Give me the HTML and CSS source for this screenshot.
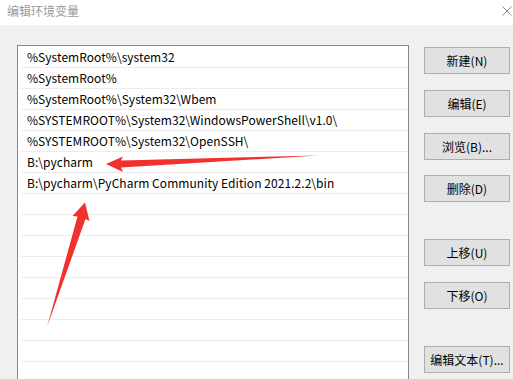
FILE: index.html
```html
<!DOCTYPE html>
<html lang="zh-CN">
<head>
<meta charset="utf-8">
<title>编辑环境变量</title>
<link rel="stylesheet" href="styles.css">
</head>
<body>
<div class="window">
  <div class="titlebar">
    <span class="title">编辑环境变量</span>
    <svg class="close" width="10" height="10" viewBox="0 0 10 10"><path d="M0.5 0.5L9.5 9.5M9.5 0.5L0.5 9.5" stroke="#8a8a8a" stroke-width="1" fill="none"/></svg>
  </div>
  <div class="content">
    <div class="list">
      <div class="row">%SystemRoot%\system32</div>
      <div class="row">%SystemRoot%</div>
      <div class="row">%SystemRoot%\System32\Wbem</div>
      <div class="row">%SYSTEMROOT%\System32\WindowsPowerShell\v1.0\</div>
      <div class="row">%SYSTEMROOT%\System32\OpenSSH\</div>
      <div class="row">B:\pycharm</div>
      <div class="row">B:\pycharm\PyCharm Community Edition 2021.2.2\bin</div>
      <div class="row"></div>
      <div class="row"></div>
      <div class="row"></div>
      <div class="row"></div>
      <div class="row"></div>
      <div class="row"></div>
      <div class="row"></div>
      <div class="row"></div>
      <div class="row"></div>
    </div>
    <div class="buttons">
      <button class="btn">新建(N)</button>
      <button class="btn">编辑(E)</button>
      <button class="btn">浏览(B)...</button>
      <button class="btn">删除(D)</button>
      <button class="btn spaced">上移(U)</button>
      <button class="btn">下移(O)</button>
      <button class="btn spaced">编辑文本(T)...</button>
    </div>
  </div>
  <svg class="arrows" width="513" height="379" viewBox="0 0 513 379">
    <polygon points="106,164 123,156.5 121,160.5 318,155.5 121,167.5 123,172" fill="#f2312f"/>
    <polygon points="85,202.5 89.5,221 85.5,219 47,327 77.5,216.5 72.5,216" fill="#f2312f"/>
  </svg>
</div>
</body>
</html>
```
FILE: styles.css
```css
html, body {
  margin: 0;
  padding: 0;
}
body {
  width: 513px;
  height: 379px;
  overflow: hidden;
  background: #f0f0f0;
  font-family: "Noto Sans CJK SC", "Noto Sans", sans-serif;
  font-size: 12px;
  color: #000;
}
.window {
  position: relative;
  width: 513px;
  height: 379px;
}
.titlebar {
  height: 25px;
  background: #ffffff;
  display: flex;
  align-items: center;
  justify-content: space-between;
  padding: 0 1px 3px 7px;
  box-sizing: border-box;
}
.title {
  color: #9a9a9a;
  font-size: 12px;
  line-height: 14px;
}
.close {
  display: block;
}
.content {
  display: flex;
  align-items: flex-start;
  padding: 20px 0 0 17px;
}
.list {
  width: 390px;
  height: 340px;
  background: #ffffff;
  border: 1px solid #828790;
  padding-top: 1px;
  overflow: hidden;
  flex: none;
}
.row {
  height: 20px;
  line-height: 20px;
  margin-left: 3px;
  padding-left: 6px;
  border-bottom: 1px solid #ececec;
  white-space: nowrap;
  letter-spacing: 0.05px;
}
.buttons {
  display: flex;
  flex-direction: column;
  gap: 15.7px;
  margin-left: 15px;
  padding-top: 2.3px;
}
.btn {
  width: 86px;
  height: 27px;
  margin: 0;
  padding: 0;
  background: #e1e1e1;
  border: 1px solid #adadad;
  font-family: "Noto Sans CJK SC", "Noto Sans", sans-serif;
  font-size: 12px;
  color: #000;
}
.btn.spaced {
  margin-top: 21.3px;
}
.arrows {
  position: absolute;
  left: 0;
  top: 0;
  pointer-events: none;
}
```
